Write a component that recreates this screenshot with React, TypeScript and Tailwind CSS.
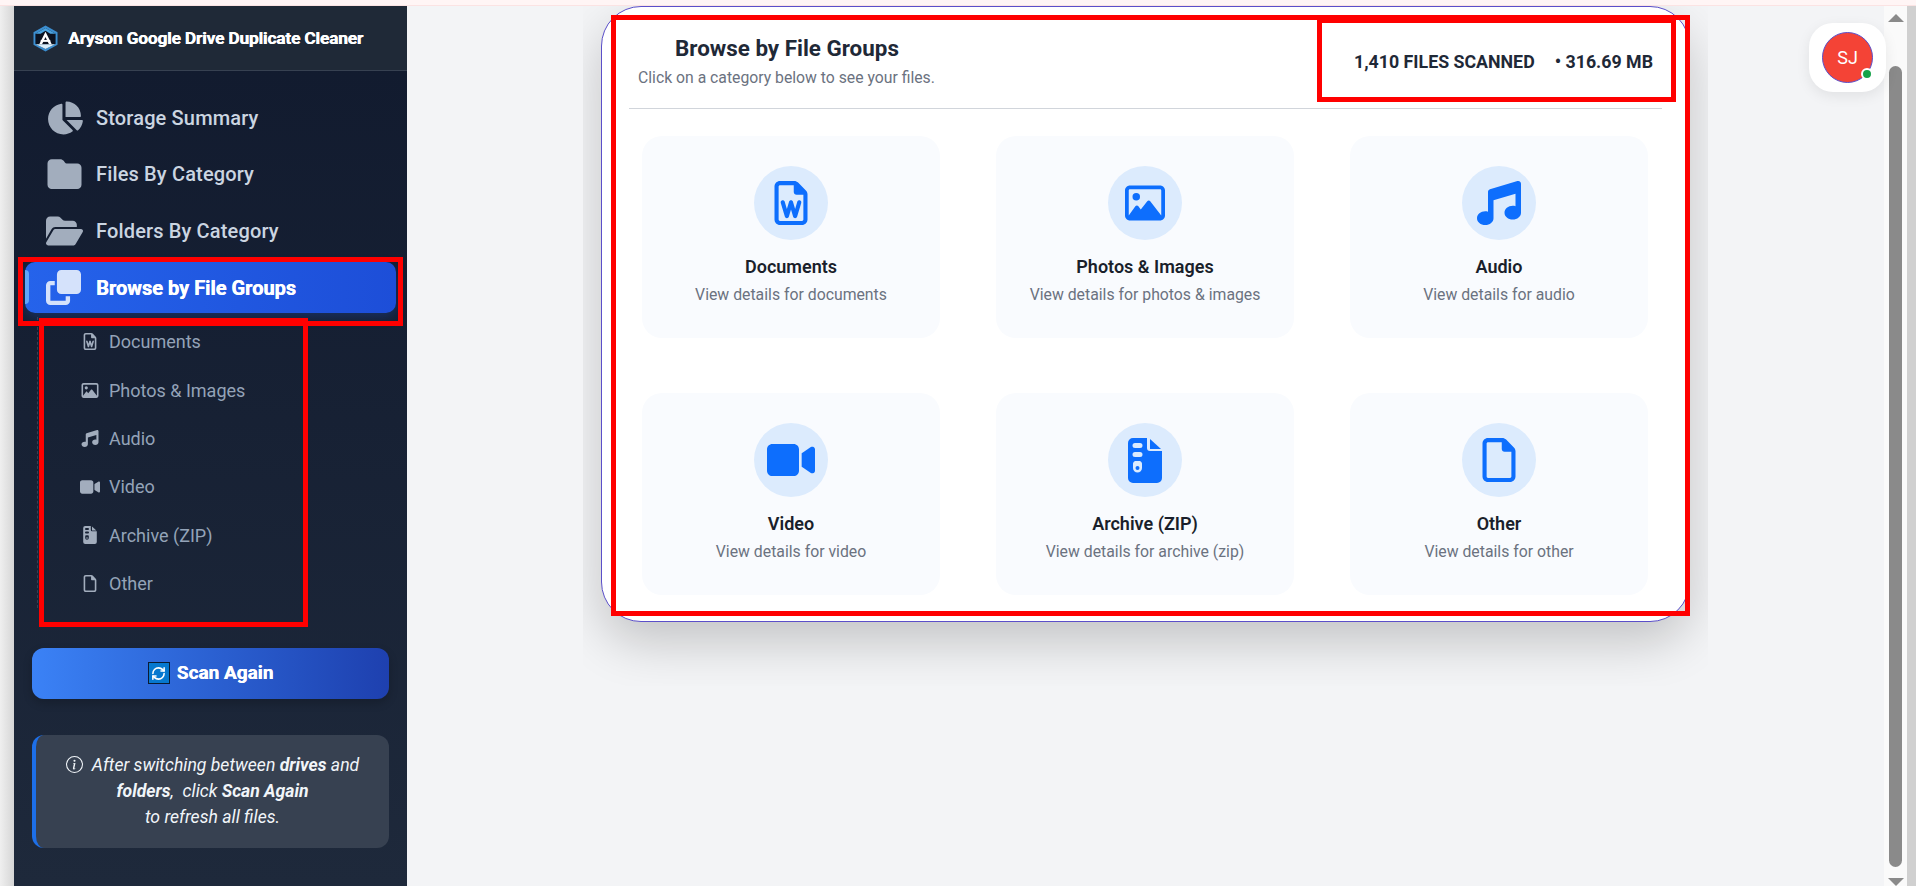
import React from "react";
import {
  FaChartPie,
  FaClone,
  FaFolder,
  FaFolderOpen,
  FaMusic,
  FaRegFile,
  FaRegFileWord,
  FaRegImage,
  FaVideo,
} from "react-icons/fa6";
import { BsInfoCircle } from "react-icons/bs";
import { LuRefreshCw } from "react-icons/lu";

// archive glyph in the original has two dashes and a pull tab, no package has that exact one
const ArchiveIcon = ({ className }: { className?: string }) => (
  <svg viewBox="0 0 34 45" className={className} fill="currentColor">
    <path
      fillRule="evenodd"
      d="M5 0h14v10a3 3 0 0 0 3 3h12v27a5 5 0 0 1-5 5H5a5 5 0 0 1-5-5V5a5 5 0 0 1 5-5zM7 5a2 2 0 0 0 0 5h5a2 2 0 0 0 0-5H7zM7 14a2 2 0 0 0 0 5h5a2 2 0 0 0 0-5H7zM7 23a3 3 0 0 0-2 2.500V30a4.500 4.500 0 0 0 9 0v-4.500A3 3 0 0 0 12 23H7zM9.500 28a2 2 0 1 1 0 4a2 2 0 0 1 0-4z"
    />
    <path d="M22 1l11 10H22z" />
  </svg>
);

const groups = [
  { name: "Documents", detail: "documents", icon: FaRegFileWord, size: "h-[44px] w-[44px]", small: "h-[17px] w-[20px]" },
  { name: "Photos & Images", detail: "photos & images", icon: FaRegImage, size: "h-[40px] w-[40px]", small: "h-[17px] w-[20px]" },
  { name: "Audio", detail: "audio", icon: FaMusic, size: "h-[44px] w-[44px]", small: "h-[17px] w-[20px]" },
  { name: "Video", detail: "video", icon: FaVideo, size: "h-[48px] w-[48px]", small: "h-[20px] w-[20px]" },
  { name: "Archive (ZIP)", detail: "archive (zip)", icon: ArchiveIcon, size: "h-[45px] w-[34px]", small: "h-[18px] w-[14px]" },
  { name: "Other", detail: "other", icon: FaRegFile, size: "h-[44px] w-[44px]", small: "h-[17px] w-[20px]" },
];

const navItems = [
  { name: "Storage Summary", icon: FaChartPie },
  { name: "Files By Category", icon: FaFolder },
  { name: "Folders By Category", icon: FaFolderOpen },
];

const Logo = () => (
  <svg viewBox="0 0 26 28" className="h-[27px] w-[25px] shrink-0">
    <polygon points="13,0.5 25.5,7.5 25.5,20.5 13,27.5 0.5,20.5 0.5,7.5" fill="#3b8ed0" />
    <polygon points="13,3 23.5,9 23.5,19.5 13,25 2.5,19.5 2.5,9" fill="#0b1220" />
    <polygon points="13,3 23.5,9 18,9 13,6 8,9 2.5,9" fill="#4aa3df" />
    <polygon points="13,7 19.5,20 16.6,20 13,12.5 9.4,20 6.5,20" fill="#ffffff" />
    <rect x="8" y="15.5" width="10" height="2" fill="#ffffff" />
    <polygon points="3,20 23,20 13,25" fill="#d9eefb" />
  </svg>
);

const Sidebar = () => (
  <aside className="flex h-full w-[393px] shrink-0 flex-col bg-gradient-to-b from-[#111a2e] to-[#1e293b] font-['Roboto',sans-serif]">
    <div className="flex h-[65px] shrink-0 items-center gap-[10px] border-b border-[#374151] bg-[#1f2937] pl-[19px]">
      <Logo />
      <span className="text-[17.4px] font-bold tracking-[-0.2px] text-white [text-shadow:0.4px_0_0_currentColor]">
        Aryson Google Drive Duplicate Cleaner
      </span>
    </div>

    <nav className="flex flex-col pt-[19px]">
      {navItems.map((item) => (
        <div
          key={item.name}
          className="flex h-[56.3px] items-center gap-[13px] pl-[32px] text-[20px] font-medium tracking-[0.15px] text-[#cbd5e1]"
        >
          <span className="flex w-[37px] justify-center text-[#a2adbd]">
            <item.icon className="h-[34px] w-[37px]" />
          </span>
          {item.name}
        </div>
      ))}
      <div className="relative mx-[11px] mt-[3.6px] flex h-[51px] items-center gap-[15px] rounded-[10px] bg-gradient-to-r from-[#2563eb] to-[#1d4ed8] pl-[21px] text-[20px] font-bold text-white shadow-[0_4px_12px_rgba(37,99,235,0.25)] [text-shadow:0.4px_0_0_currentColor]">
        <span className="absolute top-[8px] left-0 h-[34px] w-[4px] rounded-r bg-[#60a5fa]" />
        <FaClone className="h-[35px] w-[35px] text-[#d5e2fb]" />
        Browse by File Groups
      </div>
    </nav>

    <ul className="mt-[4px] ml-[23px] flex h-[291px] flex-col border-l border-dashed border-[#374151] pl-[42px]">
      {groups.map((group) => (
        <li
          key={group.name}
          className="flex h-[48.4px] items-center gap-[9px] text-[18px] text-[#94a3b8]"
        >
          <span className="flex w-[20px] justify-center text-[#a2adbd]">
            <group.icon className={group.small} />
          </span>
          {group.name}
        </li>
      ))}
    </ul>

    <button className="mx-[18px] mt-[39.5px] flex h-[51px] shrink-0 items-center justify-center gap-[7px] rounded-[12px] bg-gradient-to-r from-[#3b82f6] to-[#1e40af] text-[19px] font-bold text-white shadow-[0_4px_10px_rgba(0,0,0,0.2)] [text-shadow:0.4px_0_0_currentColor]">
      <span className="flex h-[22px] w-[22px] items-center justify-center border border-[#0b1b33] bg-[#0678cf]">
        <LuRefreshCw className="h-[15px] w-[15px]" strokeWidth={2.5} />
      </span>
      Scan Again
    </button>

    <div className="mx-[18px] mt-[36px] h-[113px] shrink-0 rounded-[12px] border-l-4 border-[#1d6fe8] bg-[#374151] px-[10px] pt-[17px] text-center text-[17.6px] leading-[26px] text-[#f1f5f9] italic">
      <BsInfoCircle className="mr-[9px] inline h-[17px] w-[17px] align-[-2px] not-italic" />
      After switching between <b>drives</b> and <b>folders</b>,&nbsp; click <b>Scan Again</b>
      <br />
      to refresh all files.
    </div>
  </aside>
);

const GroupCard = ({ name, detail, icon: Icon, size }: (typeof groups)[number]) => (
  <div className="flex h-[202px] flex-col items-center rounded-[20px] bg-[#f9fbfe] pt-[30px]">
    <div className="flex h-[74px] w-[74px] items-center justify-center rounded-full bg-[#dcebfd]">
      <Icon className={`${size} text-[#0d6efd]`} />
    </div>
    <h3 className="mt-[16px] text-[18px] leading-[22px] font-semibold text-[#1a1f2b]">{name}</h3>
    <p className="mt-[6px] text-[15.8px] leading-[22px] text-[#6b7280]">View details for {detail}</p>
  </div>
);

const Scrollbar = () => (
  <div className="flex h-full shrink-0">
    <div className="flex w-[23px] flex-col items-center bg-[#fafafa] pt-[8px]">
      <div className="h-0 w-0 border-x-[8px] border-b-[8px] border-x-transparent border-b-[#8a8a8a]" />
      <div className="mt-[44px] h-[803px] w-[13px] rounded-full bg-[#8a8a8a]" />
      <div className="mt-[11px] h-0 w-0 border-x-[8px] border-t-[8px] border-x-transparent border-t-[#8a8a8a]" />
    </div>
    <div className="w-[9px] bg-[#d0d0d0]" />
  </div>
);

export default function App() {
  return (
    <div className="relative flex h-screen w-full flex-col overflow-hidden bg-[#f3f4f6] font-['Roboto',sans-serif]">
      <div className="h-[6px] shrink-0 border-b border-[#fbe3e3] bg-[#fff5f5]" />

      <div className="flex min-h-0 flex-1">
        <div className="w-[14px] shrink-0 bg-gradient-to-r from-[#efefef] to-[#d6d6d6]" />
        <Sidebar />

        <main className="relative min-w-0 flex-1">
          {/* shadow is cut off at this wrapper's edges, same as the original */}
          <div className="ml-[176px] h-[680px] w-[1125px] overflow-hidden px-[18px]">
            <section className="relative h-[616px] w-[1089px] rounded-[40px] border border-[#5b4fc9] bg-white shadow-[0_20px_50px_rgba(0,0,0,0.2)]">
              <div className="flex h-[101px] items-start justify-between pr-[36px]">
                <div>
                  <h2 className="mt-[25.500px] ml-[73px] text-[22.4px] leading-[30px] font-bold text-[#1f2937]">
                    Browse by File Groups
                  </h2>
                  <p className="mt-[5.500px] ml-[36px] text-[15.75px] leading-[20px] text-[#6b7280]">
                    Click on a category below to see your files.
                  </p>
                </div>
                <div className="mt-[44px] flex gap-[20px] text-[17.8px] leading-[22px] font-bold text-[#1f2937]">
                  <span>1,410 FILES SCANNED</span>
                  <span>• 316.69 MB</span>
                </div>
              </div>
              <div className="mx-[27px] h-px bg-[#d1d5db]" />

              <div className="mt-[27px] grid grid-cols-3 gap-x-[56px] gap-y-[55px] pr-[41px] pl-[40px]">
                {groups.map((group) => (
                  <GroupCard key={group.name} {...group} />
                ))}
              </div>
            </section>
          </div>

          {/* user badge */}
          <div className="absolute top-[17px] right-[-2px] flex h-[69px] w-[77px] items-center justify-center rounded-[24px] bg-white shadow-[0_4px_14px_rgba(0,0,0,0.08)]">
            <div className="relative flex h-[51px] w-[51px] items-center justify-center rounded-full border border-[#5b4fc9] bg-[#f44336] text-[18px] text-white">
              SJ
              <span className="absolute right-[-1px] bottom-[2px] h-[12px] w-[12px] rounded-full border-2 border-white bg-[#16a34a]" />
            </div>
          </div>
        </main>

        <Scrollbar />
      </div>

      {/* red annotation boxes drawn on the screenshot */}
      <div className="pointer-events-none absolute top-[15px] left-[611px] h-[601px] w-[1079px] border-[5px] border-[#ff0000]" />
      <div className="pointer-events-none absolute top-[18px] left-[1317px] h-[84px] w-[359px] border-[5px] border-[#ff0000]" />
      <div className="pointer-events-none absolute top-[257px] left-[18px] h-[69px] w-[385px] border-[5px] border-[#ff0000]" />
      <div className="pointer-events-none absolute top-[318px] left-[39px] h-[309px] w-[269px] border-[5px] border-[#ff0000]" />
    </div>
  );
}
